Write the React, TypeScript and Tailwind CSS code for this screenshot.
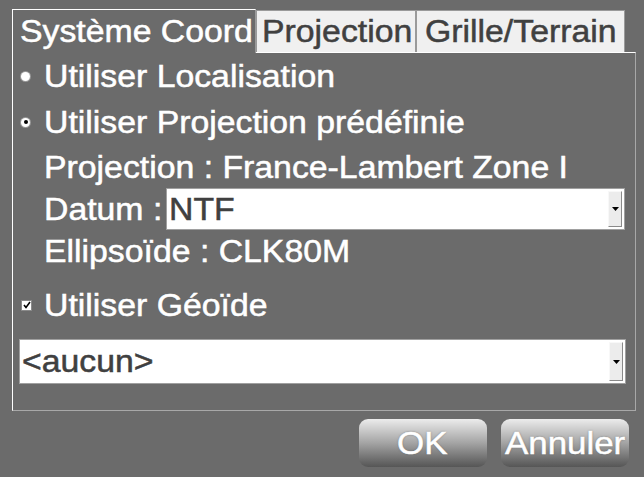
import React from "react";

// text in the reference is drawn a little wider than plain Arial
function T({ children, className = "" }: { children: React.ReactNode; className?: string }) {
  return (
    <span
      className={
        "inline-block origin-left scale-x-[1.09] whitespace-nowrap [-webkit-text-stroke:0.5px_currentColor] " +
        className
      }
    >
      {children}
    </span>
  );
}

function Radio({ checked }: { checked?: boolean }) {
  return (
    <span className="flex h-[9px] w-[9px] items-center justify-center rounded-full bg-white shadow-[0_0_0_1px_#9a9a9a]">
      {checked && <span className="h-[4px] w-[4px] rounded-full bg-black" />}
    </span>
  );
}

function Select({ value, className }: { value: string; className: string }) {
  return (
    <div className={"flex border border-[#a0a0a0] bg-white " + className}>
      <div className="flex flex-1 items-center pl-[2px] text-[#404040]">
        <T>{value}</T>
      </div>
      <div className="m-[2px] flex w-[14px] items-center justify-center border border-[#f8f8f8] border-r-[#8a8a8a] border-b-[#8a8a8a] bg-[#ececec]">
        <svg width="7" height="4" viewBox="0 0 7 4">
          <path d="M0 0h7L3.5 4z" fill="#000" />
        </svg>
      </div>
    </div>
  );
}

function Button({ label, pad }: { label: string; pad: string }) {
  return (
    <button
      className={
        "flex h-[48px] w-[128px] items-center rounded-[9px] bg-gradient-to-b from-[#ececec] via-[#a4a4a4] to-[#565656] text-[32px] text-white [text-shadow:0_0_2px_#666] " +
        pad
      }
    >
      <T>{label}</T>
    </button>
  );
}

export default function App() {
  return (
    <div className="h-[477px] w-[644px] overflow-hidden bg-[#6b6b6b] font-['Liberation_Sans',Arial,sans-serif] text-[31px] leading-none text-white">
      {/* Tabs */}
      <div className="flex items-end pl-[12px] pt-[9px]">
        <div className="relative z-10 -mb-px flex h-[44px] w-[244px] items-center border-l border-t border-r border-white border-r-[#9a9a9a] bg-[#6b6b6b] pl-[7px]">
          <T>Système Coord</T>
        </div>
        <div className="flex h-[42px] w-[160px] items-center border border-[#9a9a9a] border-b-0 bg-[#f0f0f0] pl-[5px] text-[#404040]">
          <T>Projection</T>
        </div>
        <div className="flex h-[42px] w-[209px] items-center border border-[#9a9a9a] border-b-0 bg-[#f0f0f0] pl-[8px] text-[#404040]">
          <T>Grille/Terrain</T>
        </div>
      </div>

      {/* Panel */}
      <div className="ml-[12px] flex h-[359px] w-[624px] flex-col border border-white border-r-[#a8a8a8] border-b-[#a8a8a8] pl-[8px] pr-[9px]">
        <div className="mt-[8px] flex h-[30px] items-center gap-[14px]">
          <Radio />
          <T>Utiliser Localisation</T>
        </div>
        <div className="mt-[16px] flex h-[30px] items-center gap-[14px]">
          <Radio checked />
          <T>Utiliser Projection prédéfinie</T>
        </div>
        <div className="mt-[15px] flex h-[30px] items-center pl-[23px]">
          <T>Projection : France-Lambert Zone I</T>
        </div>
        <div className="mt-[6px] flex items-center pl-[23px]">
          <span className="w-[122px]">
            <T>Datum :</T>
          </span>
          <Select value="NTF" className="mr-[1px] h-[42px] flex-1" />
        </div>
        <div className="mt-[6px] flex h-[30px] items-center pl-[23px]">
          <T>Ellipsoïde : CLK80M</T>
        </div>
        <div className="mt-[24px] flex h-[30px] items-center gap-[12px]">
          <span className="flex h-[11px] w-[11px] items-center justify-center border border-[#8a8a8a] bg-white">
            <svg width="8" height="8" viewBox="0 0 8 8">
              <path d="M1 4l2 2.5L7 1" stroke="#000" strokeWidth="1.6" fill="none" />
            </svg>
          </span>
          <T>Utiliser Géoïde</T>
        </div>
        <Select value="<aucun>" className="mt-[19px] ml-[-2px] h-[45px]" />
      </div>

      {/* Buttons */}
      <div className="mt-[8px] flex justify-end gap-[14px] pr-[15px]">
        <Button label="OK" pad="pl-[38px]" />
        <Button label="Annuler" pad="pl-[4px]" />
      </div>
    </div>
  );
}
